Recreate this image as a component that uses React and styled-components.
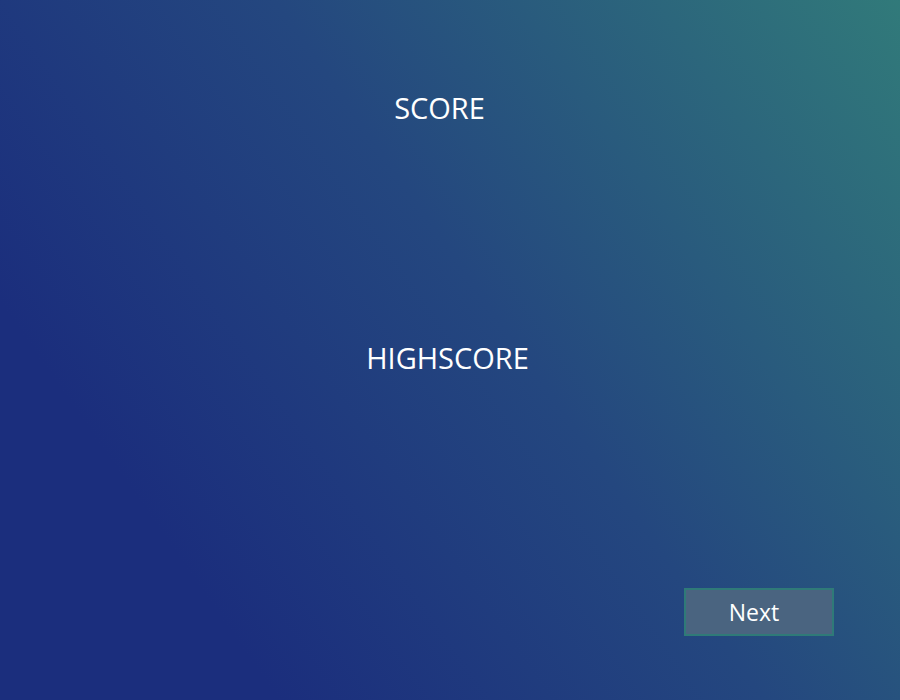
import React from "react";
import styled, { createGlobalStyle } from "styled-components";

const GlobalStyle = createGlobalStyle`
  html, body {
    margin: 0;
    padding: 0;
  }
  body {
    font-family: "Open Sans", "Noto Sans", sans-serif;
  }
`;

const Screen = styled.div`
  width: 900px;
  height: 700px;
  display: flex;
  flex-direction: column;
  box-sizing: border-box;
  padding: 89px 66px 0 0;
  background: linear-gradient(55deg, #1b2e7d 20%, #24477f 55%, #317a7a 100%);
  color: #ffffff;
`;

const Label = styled.div`
  align-self: center;
  font-size: 29px;
  line-height: 38px;
  margin-left: ${p => p.shift || 0}px;
`;

const Spacer = styled.div`
  height: ${p => p.h}px;
  flex: 0 0 auto;
`;

const Footer = styled.div`
  display: flex;
  justify-content: flex-end;
`;

const NextButton = styled.button`
  width: 150px;
  height: 48px;
  box-sizing: border-box;
  border: 2px solid #2f7a78;
  background: #4a6480;
  color: #ffffff;
  font-family: "Open Sans", "Noto Sans", sans-serif;
  font-size: 23px;
  padding: 0 10px 0 0;
  cursor: pointer;
`;

export default function App() {
  return (
    <>
      <GlobalStyle />
      <Screen>
        <Label shift={45}>SCORE</Label>
        <Spacer h={212} />
        <Label shift={61}>HIGHSCORE</Label>
        <Spacer h={211} />
        <Footer>
          <NextButton>Next</NextButton>
        </Footer>
      </Screen>
    </>
  );
}
